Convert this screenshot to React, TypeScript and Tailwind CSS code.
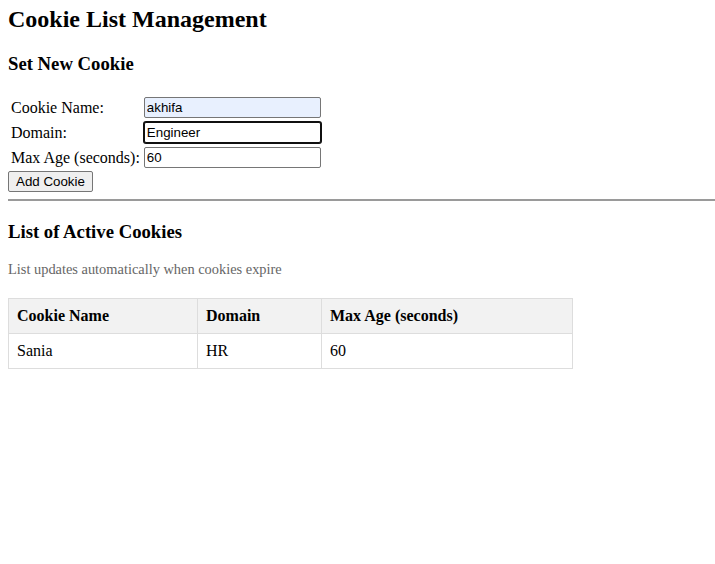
import React from "react";

const cookies = [{ name: "Sania", domain: "HR", maxAge: "60" }];

const inputBase =
  "w-[177px] h-[21px] px-[2px] rounded-[2px] border text-[13.33px] font-['Liberation_Sans',Arial,sans-serif] text-black outline-none";

export default function App() {
  return (
    <div className="min-h-[564px] bg-white px-2 pt-[5px] font-['Liberation_Serif','Times_New_Roman',serif] text-black">
      <h1 className="text-[24px] font-bold leading-[28px]">Cookie List Management</h1>
      <h2 className="mt-[20px] text-[18.72px] font-bold leading-[22px]">Set New Cookie</h2>

      <form className="mt-[19px]" onSubmit={(e) => e.preventDefault()}>
        <table className="border-separate border-spacing-[2px] text-[16px] leading-[18px]">
          <tbody>
            <tr>
              <td className="p-[1px] align-middle">Cookie Name:</td>
              <td className="p-[1px]">
                <input className={`${inputBase} block border-[#767676] bg-[#e8f0fe]`} defaultValue="akhifa" />
              </td>
            </tr>
            <tr>
              <td className="p-[1px] align-middle">Domain:</td>
              <td className="p-[1px]">
                <input
                  className={`${inputBase} block border-[#101010] bg-white shadow-[0_0_0_1px_#101010]`}
                  defaultValue="Engineer"
                />
              </td>
            </tr>
            <tr>
              <td className="p-[1px] align-middle">Max Age (seconds):</td>
              <td className="p-[1px]">
                <input className={`${inputBase} block border-[#767676] bg-white`} defaultValue="60" />
              </td>
            </tr>
          </tbody>
        </table>
        <button
          type="submit"
          className="block h-[21px] px-[7px] rounded-[2px] border border-[#767676] bg-[#efefef] text-[13.33px] leading-none font-['Liberation_Sans',Arial,sans-serif]"
        >
          Add Cookie
        </button>
      </form>

      <hr className="mt-[7px] w-[707px] border-t-2 border-[#9a9a9a]" />

      <h2 className="mt-[20px] text-[18.72px] font-bold leading-[22px]">List of Active Cookies</h2>
      <p className="mt-[18px] text-[14.4px] leading-[16px] text-[#666]">List updates automatically when cookies expire</p>

      <table className="mt-[21px] w-[565px] border-collapse text-[16px]">
        <thead>
          <tr className="bg-[#f2f2f2]">
            <th className="w-[189px] border border-[#ddd] px-2 h-[35px] text-left font-bold">Cookie Name</th>
            <th className="w-[124px] border border-[#ddd] px-2 h-[35px] text-left font-bold">Domain</th>
            <th className="border border-[#ddd] px-2 h-[35px] text-left font-bold">Max Age (seconds)</th>
          </tr>
        </thead>
        <tbody>
          {cookies.map((c) => (
            <tr key={c.name}>
              <td className="border border-[#ddd] px-2 h-[35px]">{c.name}</td>
              <td className="border border-[#ddd] px-2 h-[35px]">{c.domain}</td>
              <td className="border border-[#ddd] px-2 h-[35px]">{c.maxAge}</td>
            </tr>
          ))}
        </tbody>
      </table>
    </div>
  );
}
